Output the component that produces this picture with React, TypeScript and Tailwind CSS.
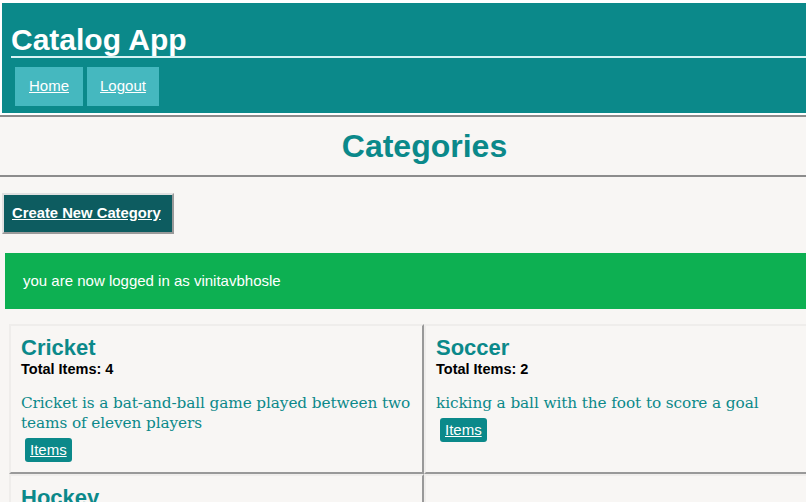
import React from "react";

const cards = [
  { name: "Cricket", total: 4, desc: "Cricket is a bat-and-ball game played between two teams of eleven players" },
  { name: "Soccer", total: 2, desc: "kicking a ball with the foot to score a goal" },
  { name: "Hockey", total: 3, desc: "" },
  { name: "", total: 0, desc: "" },
];

function Card({ c }: { c: (typeof cards)[number] }) {
  return (
    <div className="w-[415px] h-[150px] shrink-0 border-t-2 border-l-2 border-t-[#efedeb] border-l-[#efedeb] border-r-2 border-b-2 border-r-[#999] border-b-[#999] pl-[10px] pr-[2px] pt-[9px]">
      {c.name && (
        <>
          <h3 className="text-[22px] font-bold text-[#0b898a] leading-[26px]">{c.name}</h3>
          <div className="text-[14.5px] font-bold text-black leading-[16px]">Total Items: {c.total}</div>
          {c.desc && (
            <p className="mt-[16px] text-[15.3px] leading-[20px] tracking-[-0.1px] text-[#0b898a] font-['DejaVu_Serif',serif]">{c.desc}</p>
          )}
          {c.desc && (
            <a href="#" className="inline-flex items-center h-[24px] mt-[5px] ml-[4px] bg-[#0b898a] rounded-[3px] text-white underline text-[15px] px-[5px]">
              Items
            </a>
          )}
        </>
      )}
    </div>
  );
}

export default function App() {
  return (
    <div className="w-[806px] h-[502px] overflow-hidden bg-[#f8f6f4] font-['Liberation_Sans',Arial,sans-serif]">
      <div className="w-[849px]">
        <header className="bg-[#0b898a] border-2 border-white border-t-[3px] border-r-0 h-[115px] border-b-[2px]">
          <h1 className="ml-[9px] pt-[21px] text-white text-[30px] font-bold leading-[32px] border-b-2 border-[#d8f4f4]">Catalog App</h1>
          <nav className="flex gap-[4px] ml-[13px] mt-[9px]">
            <a href="#" className="bg-[#45b8bf] text-white underline text-[15px] h-[39px] flex items-center px-[14px]">Home</a>
            <a href="#" className="bg-[#45b8bf] text-white underline text-[15px] h-[39px] flex items-center px-[13px]">Logout</a>
          </nav>
        </header>
        <div className="h-[2px] bg-[#8c8c8c]" />
        <div className="h-[60px] flex items-center justify-center border-b-2 border-[#8c8c8c]">
          <h2 className="text-[32px] font-bold text-[#0b898a]">Categories</h2>
        </div>
        <div className="pt-[16px] pl-[2px]">
          <a href="#" className="inline-flex items-center h-[41px] w-[172px] bg-[#0d5c60] border-2 border-t-[#e0e0e0] border-l-[#e0e0e0] border-r-[#9a9a9a] border-b-[#9a9a9a] text-white font-bold underline text-[14.8px] pl-[8px]">
            Create New Category
          </a>
        </div>
        <div className="mt-[19px] ml-[5px] h-[56px] bg-[#0db052] flex items-center pl-[18px] text-white text-[15px]">
          you are now logged in as vinitavbhosle
        </div>
        <div className="ml-[9px] mt-[15px] flex flex-wrap w-[830px]">
          {cards.map((c, i) => (
            <Card key={i} c={c} />
          ))}
        </div>
      </div>
    </div>
  );
}
